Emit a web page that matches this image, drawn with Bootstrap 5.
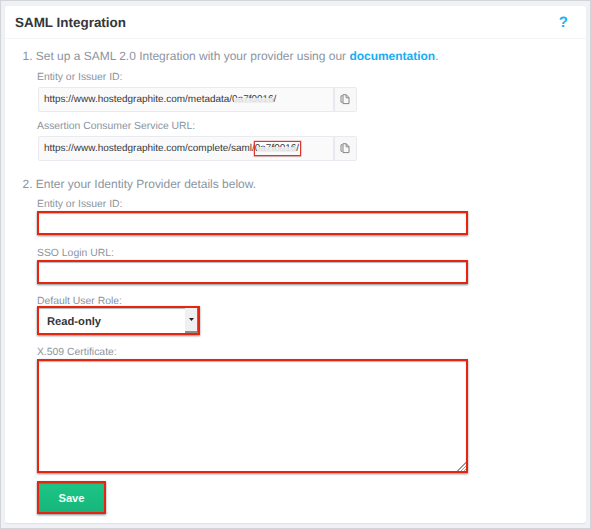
<!DOCTYPE html>
<html lang="en">
<head>
<meta charset="utf-8">
<title>SAML Integration</title>
<link href="https://cdn.jsdelivr.net/npm/bootstrap@5.3.0/dist/css/bootstrap.min.css" rel="stylesheet">
<style>
body{font-family:"Liberation Sans",Arial,sans-serif;background:#f0f1f5;height:529px;overflow:hidden;border:1px solid #d3d4d7;padding:5px 4px 5px 4px;color:#3a3c40;text-rendering:geometricPrecision}
.panel{height:517px;border:0;border-radius:3px;box-shadow:0 1px 1px #dfe1e6}
.panel-top{height:33px;border-bottom:1px solid #f5f5f6;padding:0 18px 0 10px}
.panel-top h1{font-size:13.45px;line-height:34px;font-weight:700;color:#34363a}
.help{font-size:15px;line-height:33px;color:#1cb2f6;font-weight:700}
.step{font-size:11.97px;line-height:19px;height:19px;color:#8b949e;padding-left:17.5px;white-space:nowrap}
.step a{color:#15aef5;font-weight:700}
.step-one{margin-top:8px}.step-two{margin-top:14px}
.fields{padding-left:32px}
.lab{display:block;font-size:10.4px;line-height:18px;height:16px;color:#8b949e;white-space:nowrap}
.gap-a{margin-top:3px;height:18px}
.gap-b{margin-top:6px;height:18px}
.gap-c{margin-top:2px;height:15px}
.gap-d{margin-top:9px;height:13px}
.gap-e{margin-top:10px;height:15px}
.gap-f{margin-top:9px;height:15px}
.copybox{width:319px;height:25px;margin-left:.5px;border:1px solid #e9eaef;border-radius:2px;background:#fafafa;font-size:9.96px;line-height:24px;color:#37393c}
.copybox .url{padding-left:5.5px;white-space:nowrap}
.copybtn{width:23px;border:0;border-left:2px solid #e9eaf0;background:#f8f8f9;padding:0}
.masked{position:relative;display:inline-block;line-height:12px}
.masked::after{content:"";position:absolute;left:2px;right:3px;top:4px;height:5px;background:#ececec;opacity:.9}
.masked.hot::before{content:"";position:absolute;left:-1px;right:-2px;top:-2px;height:15px;border:1px solid #e0352a;box-shadow:0 0 0 .5px #e0352a66,0 1px 1px #ccc}
.hot-box{border:2px solid #e5250d;border-radius:0;box-shadow:0 1px 2px rgba(60,80,90,.65),inset 0 1px 1px rgba(60,80,90,.4);background-color:#fff;padding:0}
.line-in{width:431px;height:24px;min-height:0}
.role{width:163px;height:29px;font-size:11.2px;font-weight:700;color:#333539}
.role .value{padding:4px 0 0 8px}
.role .arrow{width:13px;background:#f0f0f0;border-right:1px solid #777;border-bottom:2px solid #8d8d8d}
.cert{width:431px;height:114px}
.cert::-webkit-resizer{background:linear-gradient(135deg,#fff 49%,#999 49% 57%,#fff 57% 67%,#999 67% 75%,#fff 75% 85%,#999 85% 93%,#fff 93%) right bottom/9px 9px no-repeat}
.save{width:69px;height:33px;background:linear-gradient(#1cc586,#18b67c);color:#effff8;font-size:11.2px;font-weight:700;padding-top:1px}
</style>
<script src="https://cdn.jsdelivr.net/npm/bootstrap@5.3.0/dist/js/bootstrap.bundle.min.js"></script>
</head>
<body>
<main class="card panel">
  <header class="panel-top d-flex justify-content-between">
    <h1 class="m-0">SAML Integration</h1><span class="help">?</span>
  </header>
  <div class="step step-one">1. Set up a SAML 2.0 Integration with your provider using our <a class="text-decoration-none" href="#">documentation</a>.</div>
  <section class="fields">
    <span class="lab gap-a">Entity or Issuer ID:</span>
    <div class="copybox d-flex justify-content-between">
      <span class="url">https://www.hostedgraphite.com/metadata/<span class="masked">0a7f0016/</span></span>
      <button class="copybtn d-flex align-items-center justify-content-center" aria-label="Copy"><svg width="10" height="11" viewBox="0 0 10 11" fill="none" stroke="#858585"><path d="M3 .7h3.3L9 3.6v6H3zM6.1 1v2.8H9M2.5 1.8H1v6.4h1.5" stroke-linejoin="round"/></svg></button>
    </div>
    <span class="lab gap-b">Assertion Consumer Service URL:</span>
    <div class="copybox d-flex justify-content-between">
      <span class="url">https://www.hostedgraphite.com/complete/saml/<span class="masked hot">0a7f0016/</span></span>
      <button class="copybtn d-flex align-items-center justify-content-center" aria-label="Copy"><svg width="10" height="11" viewBox="0 0 10 11" fill="none" stroke="#858585"><path d="M3 .7h3.3L9 3.6v6H3zM6.1 1v2.8H9M2.5 1.8H1v6.4h1.5" stroke-linejoin="round"/></svg></button>
    </div>
  </section>
  <div class="step step-two">2. Enter your Identity Provider details below.</div>
  <section class="fields">
    <label class="lab gap-c" for="a">Entity or Issuer ID:</label>
    <input id="a" class="form-control hot-box line-in">
    <label class="lab gap-e" for="b">SSO Login URL:</label>
    <input id="b" class="form-control hot-box line-in">
    <span class="lab gap-d">Default User Role:</span>
    <div class="hot-box role d-flex justify-content-between" role="button"><span class="value align-self-center">Read-only</span><span class="arrow d-flex align-items-center justify-content-center"><svg width="5" height="3"><path d="M0 0h5L2.5 3z" fill="#222"/></svg></span></div>
    <label class="lab gap-f" for="c">X.509 Certificate:</label>
    <textarea id="c" class="form-control hot-box cert"></textarea>
    <button class="btn hot-box save mt-2">Save</button>
  </section>
</main>
</body>
</html>
